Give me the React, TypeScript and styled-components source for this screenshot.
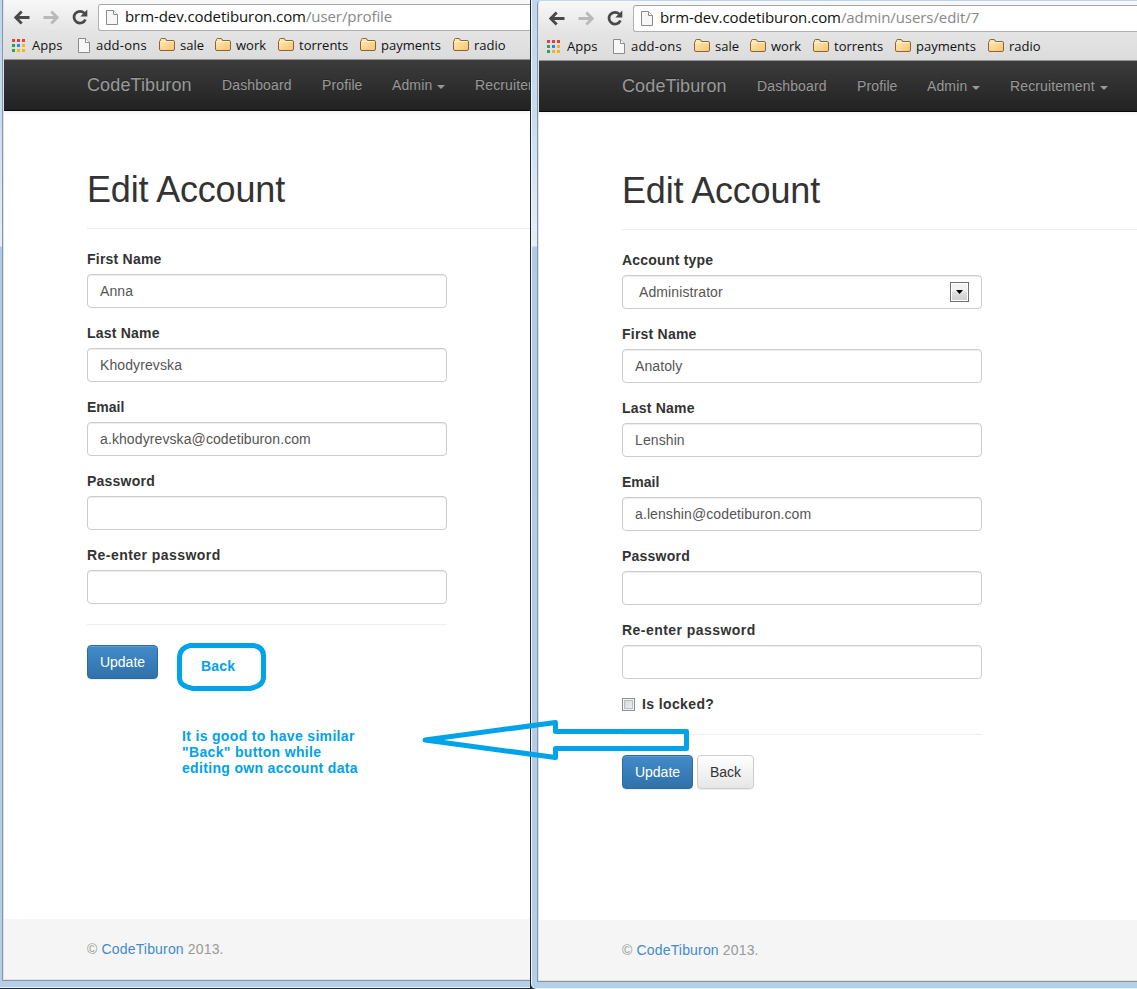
import React from "react";
import styled, { createGlobalStyle } from "styled-components";

const Global = createGlobalStyle`
  * { box-sizing: border-box; }
  html, body { margin: 0; padding: 0; background: #fff; overflow: hidden; }
  body { font-family: "Liberation Sans", Arial, sans-serif; font-size: 14px; line-height: 20px; color: #333; }
`;

const Desktop = styled.div`
  position: relative;
  display: flex;
  width: 1137px;
  height: 989px;
  overflow: hidden;
  background: #25262b;
`;

const Frame = styled.section<{ $second?: boolean }>`
  display: flex;
  flex: none;
  flex-direction: column;
  width: ${(p) => (p.$second ? "606px" : "530px")};
  height: ${(p) => (p.$second ? "989px" : "988px")};
  margin-left: ${(p) => (p.$second ? "1px" : "0")};
  padding: ${(p) => (p.$second ? "1px 0 0 5px" : "0 0 0 2px")};
  border-left: ${(p) => (p.$second ? "1px solid #eef5fc" : "0")};
  border-bottom: 1px solid #e6f1fb;
  border-bottom-left-radius: ${(p) => (p.$second ? "5px" : "0")};
  background: linear-gradient(180deg, #c0d6ee 0, #c8dcf0 110px, #e6eef7 246px, #aecbe8 247px, #b4cfea 100%);
`;

const Browser = styled.div<{ $second?: boolean }>`
  display: flex;
  flex-direction: column;
  height: 981px;
  border-left: 1px solid #8795a5;
  border-bottom: 1px solid #8a959f;
  border-top-left-radius: ${(p) => (p.$second ? "4px" : "0")};
  overflow: hidden;
  background: #fff;
  box-shadow: inset 1px 0 0 #dfe3e7;
  padding-left: 1px;
`;

const Toolbar = styled.header`
  flex: none;
  height: 60px;
  border-bottom: 1px solid #919191;
  background: linear-gradient(180deg, #f8f8f8 0, #e4e4e4 32px, #dcdcdc 59px);
  font-family: "Open Sans", "Noto Sans", sans-serif;
  color: #111;
`;

const AddressRow = styled.div`
  display: flex;
  height: 31px;
  padding: 4px 0 0 10px;
`;

const NavIcon = styled.svg<{ $gap: number }>`
  flex: none;
  width: 16px;
  height: 16px;
  margin-top: 5px;
  margin-right: ${(p) => p.$gap}px;
`;

const AddressBox = styled.div`
  display: flex;
  align-items: center;
  flex: 1;
  height: 27px;
  padding-left: 7px;
  border: 1px solid #b0b0b0;
  border-top-color: #a5a5a5;
  border-right: 0;
  border-radius: 3px 0 0 3px;
  background: #fff;
`;

const Address = styled.span`
  margin-left: 7px;
  padding-bottom: 2px;
  font-size: 15px;
  line-height: 23px;
  white-space: nowrap;
  letter-spacing: -0.08px;
  color: #111;
`;

const Path = styled.span`
  color: #888;
`;

const Bookmarks = styled.nav`
  display: flex;
  height: 28px;
  padding-left: 8px;
`;

const Bookmark = styled.div<{ $width: number; $icon: number; $spacing?: number }>`
  display: grid;
  flex: none;
  grid-template-columns: ${(p) => p.$icon}px auto;
  align-items: center;
  justify-content: start;
  width: ${(p) => p.$width}px;
  height: 28px;
  font-size: 13px;
  line-height: 18px;
  white-space: nowrap;
  letter-spacing: ${(p) => p.$spacing ?? 0}px;
`;

const Navbar = styled.nav`
  display: flex;
  flex: none;
  align-items: center;
  height: 51px;
  padding-left: 83px;
  border-bottom: 1px solid #080808;
  background: linear-gradient(180deg, #3c3c3c 0, #222 100%);
  color: #999;
  white-space: nowrap;
  letter-spacing: 0.12px;
`;

const Brand = styled.span`
  flex: none;
  width: 135px;
  font-size: 18px;
  text-shadow: 0 -1px 0 rgba(0, 0, 0, 0.25);
`;

const NavItem = styled.span<{ $width: number }>`
  display: flex;
  flex: none;
  align-items: center;
  width: ${(p) => p.$width}px;
  text-shadow: 0 -1px 0 rgba(0, 0, 0, 0.25);
`;

const Caret = styled.i`
  margin: 3px 0 0 5px;
  border: 4px solid transparent;
  border-top-color: #999;
  border-bottom: 0;
`;

const Page = styled.main`
  flex: 1;
  padding: 58px 0 0 83px;
  background: linear-gradient(180deg, #f4f4f4 0, #fff 4px);
`;

const Title = styled.h1`
  margin: 0;
  height: 60px;
  padding-top: 1px;
  border-bottom: 1px solid #eee;
  font-size: 36px;
  font-weight: 400;
  line-height: 40px;
  letter-spacing: -0.18px;
`;

const Form = styled.form`
  display: flex;
  flex-direction: column;
  width: 360px;
  padding-top: 20px;
`;

const Group = styled.div`
  display: flex;
  flex-direction: column;
  height: 74px;
`;

const Label = styled.label<{ $spacing?: number }>`
  height: 25px;
  font-weight: 700;
  letter-spacing: ${(p) => p.$spacing ?? 0.22}px;
`;

const Field = styled.div<{ $indent?: boolean }>`
  display: flex;
  align-items: center;
  justify-content: space-between;
  height: 34px;
  padding: 0 12px 0 ${(p) => (p.$indent ? 16 : 12)}px;
  border: 1px solid #ccc;
  border-radius: 4px;
  box-shadow: inset 0 1px 1px rgba(0, 0, 0, 0.075);
  color: #555;
  letter-spacing: 0.1px;
`;

const SelectButton = styled.span`
  display: grid;
  place-items: center;
  width: 19px;
  height: 20px;
  border: 1px solid #707070;
  box-shadow: inset 0 0 0 1px #fff;
  background: linear-gradient(180deg, #f2f2f2 0 45%, #dfdfdf 50%, #cecece);
`;

const CheckRow = styled.label`
  display: flex;
  align-items: center;
  height: 20px;
  font-weight: 700;
  letter-spacing: 0.38px;
`;

const CheckBox = styled.span`
  width: 13px;
  height: 13px;
  margin: 1px 7px 0 0;
  border: 1px solid #8e8f8f;
  box-shadow: inset 0 0 0 1px #f4f4f4, inset 0 0 0 2px #b8bdc2;
  background: linear-gradient(135deg, #cdd1d5, #f5f5f5);
`;

const Actions = styled.div<{ $gap: number }>`
  display: flex;
  gap: 4px;
  margin-top: ${(p) => p.$gap}px;
  padding-top: 20px;
  border-top: 1px solid #eee;
`;

const Button = styled.button<{ $primary?: boolean }>`
  width: ${(p) => (p.$primary ? 71 : 57)}px;
  height: 34px;
  padding: 0;
  border: 1px solid ${(p) => (p.$primary ? "#2d6ca2" : "#ccc")};
  border-radius: 4px;
  background: ${(p) =>
    p.$primary ? "linear-gradient(180deg, #428bca, #3071a9)" : "linear-gradient(180deg, #fff, #e6e6e6)"};
  box-shadow: inset 0 1px 0 rgba(255, 255, 255, 0.15), 0 1px 1px rgba(0, 0, 0, 0.075);
  color: ${(p) => (p.$primary ? "#fff" : "#333")};
  font: 14px/20px "Liberation Sans", Arial, sans-serif;
`;

const Footer = styled.footer`
  display: flex;
  flex: none;
  align-items: center;
  gap: 4px;
  height: 61px;
  padding-left: 83px;
  border-bottom: 1px solid #e2e2e2;
  background: #f5f5f5;
  color: #999;
  letter-spacing: 0.17px;
`;

const FooterLink = styled.a`
  color: #428bca;
`;

const Overlay = styled.svg`
  position: absolute;
  inset: 0;
  width: 1137px;
  height: 989px;
  pointer-events: none;
`;

const Note = styled.p<{ $left: number; $top: number; $spacing?: number }>`
  position: absolute;
  left: ${(p) => p.$left}px;
  top: ${(p) => p.$top}px;
  margin: 0;
  font-weight: 700;
  line-height: 16px;
  white-space: pre;
  letter-spacing: ${(p) => p.$spacing ?? 0.2}px;
  color: #00a2e8;
`;

const FileIcon = () => (
  <svg width="12" height="15" viewBox="0 0 12 15">
    <path d="M.5.5H7.500L11.500 4.500v10H.5z" fill="#f7f7f7" stroke="#8b8b8b" />
    <path d="M7.500 .5V4.500h4" fill="#fff" stroke="#8b8b8b" />
  </svg>
);

const FolderIcon = () => (
  <svg width="16" height="14" viewBox="0 0 16 14">
    <defs>
      <linearGradient id="folder" x2="1" y2="1">
        <stop stopColor="#ffecb8" />
        <stop offset="1" stopColor="#f8c471" />
      </linearGradient>
    </defs>
    <path
      d="M.5 3.500Q.5 2.500 1.500 2.500V1.500Q1.500.5 2.500.5h3.500Q7 .5 7.500 2.500H14Q15.500 2.500 15.500 4v7q0 1.500-1.500 1.500H2Q.5 12.500.5 11z"
      fill="url(#folder)"
      stroke="#8a6336"
    />
    <path d="M1.500 3.500h13" stroke="#fff4d3" />
  </svg>
);

const appColors = ["#f03a34", "#f03a34", "#f03a34", "#2aa35a", "#2688f0", "#fbb50a", "#2aa35a", "#fbb50a", "#fbb50a"];

const AppsIcon = () => (
  <svg width="13" height="13" viewBox="0 0 13 13">
    {appColors.map((c, i) => (
      <rect key={i} x={(i % 3) * 5} y={Math.floor(i / 3) * 5} width="3" height="3" fill={c} />
    ))}
  </svg>
);

const ArrowIcon = ({ color, flip, gap }: { color: string; flip?: boolean; gap: number }) => (
  <NavIcon $gap={gap} viewBox="0 0 16 16">
    <g transform={flip ? "translate(16 0) scale(-1 1)" : undefined} fill="none" stroke={color} strokeWidth="2.800">
      <path d="M1.500 8.500H15.500M7.700 2.500L1.700 8.500l6 6" />
    </g>
  </NavIcon>
);

const bookmarks = [
  { label: "sale", width: 56 },
  { label: "work", width: 63 },
  { label: "torrents", width: 82 },
  { label: "payments", width: 93 },
  { label: "radio", width: 60 },
];

type WindowProps = { second?: boolean; path: string; children: React.ReactNode };

const BrowserWindow = ({ second, path, children }: WindowProps) => (
  <Frame $second={second}>
    <Browser $second={second}>
      <Toolbar>
        <AddressRow>
          <ArrowIcon color="#484848" gap={13} />
          <ArrowIcon color="#b9b9b9" gap={13} flip />
          <NavIcon $gap={10} viewBox="0 0 16 16">
            <path d="M13.400 10.500A5.900 5.900 0 1 1 12.300 4.200" fill="none" stroke="#484848" strokeWidth="2.700" />
            <path d="M15.300 .5V7.500H8.300z" fill="#484848" />
          </NavIcon>
          <AddressBox>
            <FileIcon />
            <Address>
              brm-dev.codetiburon.com<Path>{path}</Path>
            </Address>
          </AddressBox>
        </AddressRow>
        <Bookmarks>
          <Bookmark $width={66} $icon={20}>
            <AppsIcon />
            <span>Apps</span>
          </Bookmark>
          <Bookmark $width={81} $icon={18} $spacing={0.22}>
            <FileIcon />
            <span>add-ons</span>
          </Bookmark>
          {bookmarks.map((b) => (
            <Bookmark key={b.label} $width={b.width} $icon={21}>
              <FolderIcon />
              <span>{b.label}</span>
            </Bookmark>
          ))}
        </Bookmarks>
      </Toolbar>
      <Navbar>
        <Brand>CodeTiburon</Brand>
        <NavItem $width={100}>Dashboard</NavItem>
        <NavItem $width={70}>Profile</NavItem>
        <NavItem $width={83}>
          Admin
          <Caret />
        </NavItem>
        <NavItem $width={100}>
          Recruitement
          <Caret />
        </NavItem>
      </Navbar>
      <Page>
        <Title>Edit Account</Title>
        {children}
      </Page>
      <Footer>
        <span>©</span>
        <FooterLink>CodeTiburon</FooterLink>
        <span>2013.</span>
      </Footer>
    </Browser>
  </Frame>
);

const TextGroup = ({ label, value, spacing }: { label: string; value?: string; spacing?: number }) => (
  <Group>
    <Label $spacing={spacing}>{label}</Label>
    <Field>{value}</Field>
  </Group>
);

export default function App() {
  return (
    <>
      <Global />
      <Desktop>
        <BrowserWindow path="/user/profile">
          <Form>
            <TextGroup label="First Name" value="Anna" />
            <TextGroup label="Last Name" value="Khodyrevska" />
            <TextGroup label="Email" value="a.khodyrevska@codetiburon.com" spacing={0} />
            <TextGroup label="Password" />
            <TextGroup label="Re-enter password" spacing={0.45} />
            <Actions $gap={5}>
              <Button type="button" $primary>Update</Button>
            </Actions>
          </Form>
        </BrowserWindow>
        <BrowserWindow second path="/admin/users/edit/7">
          <Form>
            <Group>
              <Label>Account type</Label>
              <Field $indent>
                Administrator
                <SelectButton>
                  <svg width="7" height="4" viewBox="0 0 7 4">
                    <path d="M0 0h7L3.500 4z" fill="#000" />
                  </svg>
                </SelectButton>
              </Field>
            </Group>
            <TextGroup label="First Name" value="Anatoly" />
            <TextGroup label="Last Name" value="Lenshin" />
            <TextGroup label="Email" value="a.lenshin@codetiburon.com" spacing={0} />
            <TextGroup label="Password" />
            <TextGroup label="Re-enter password" spacing={0.45} />
            <CheckRow>
              <CheckBox />
              Is locked?
            </CheckRow>
            <Actions $gap={20}>
              <Button type="button" $primary>Update</Button>
              <Button type="button">Back</Button>
            </Actions>
          </Form>
        </BrowserWindow>
        <Overlay viewBox="0 0 1137 989" fill="none" stroke="#00a2e8" strokeWidth="5">
          <path d="M190 645.500H253Q263.500 647 263.500 656V678Q263 686 250 688.500H193Q179.500 686 179.500 678V657Q180 648 190 645.500Z" />
          <path d="M425 740L555.500 722.500V731.500H686.500V748.500H555.500V757.500Z" strokeLinejoin="round" />
        </Overlay>
        <Note $left={201} $top={658}>Back</Note>
        <Note $left={182} $top={728} $spacing={0.33}>{'It is good to have similar\n"Back" button while\nediting own account data'}</Note>
      </Desktop>
    </>
  );
}
